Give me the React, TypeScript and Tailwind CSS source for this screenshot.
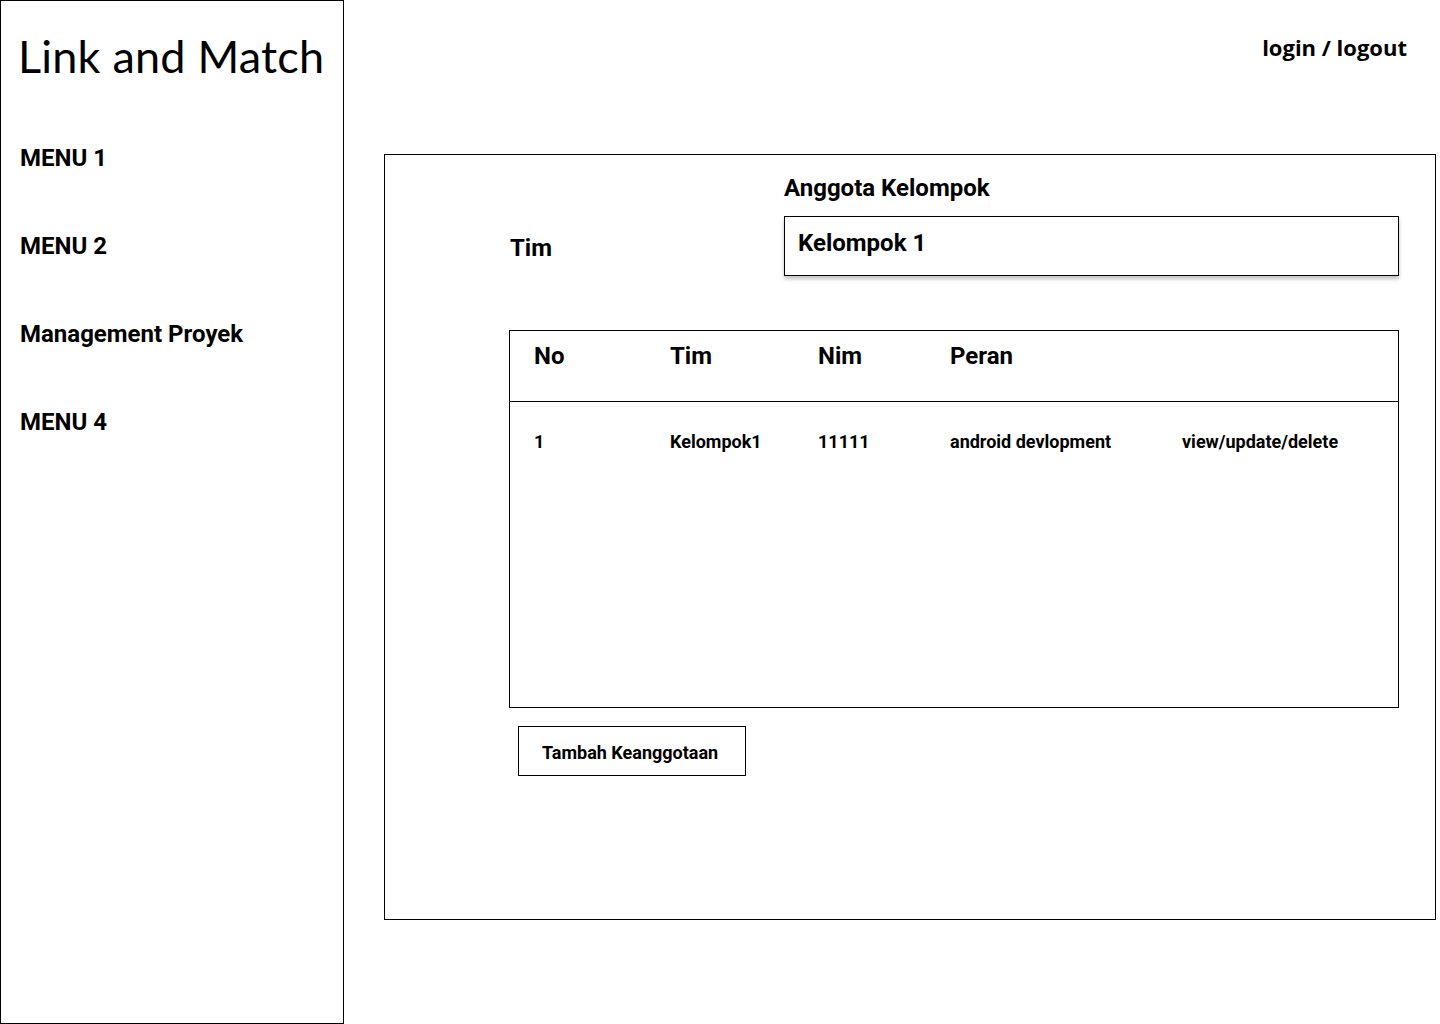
export default function App() {
  const columns = ['No', 'Tim', 'Nim', 'Peran'];
  const rows = [
    { no: '1', tim: 'Kelompok1', nim: '11111', peran: 'android devlopment', aksi: 'view/update/delete' },
  ];

  return (
    <div className="flex w-[1440px] h-[1024px] bg-white text-black font-['Roboto',sans-serif]">
      {/* Sidebar */}
      <aside className="w-[344px] h-[1024px] shrink-0 border border-black pl-[19px]">
        <h1 className="-ml-[2px] mt-[28px] text-[45px] leading-[54px] font-['Lato',sans-serif] font-normal tracking-[0.2px]">
          Link and Match
        </h1>
        <nav className="mt-[61px] flex flex-col gap-[60px]">
          {['MENU 1', 'MENU 2', 'Management Proyek', 'MENU 4'].map((m) => (
            <div key={m} className="text-[24px] leading-[28px] font-bold">
              {m}
            </div>
          ))}
        </nav>
      </aside>

      {/* Main */}
      <main className="flex-1 flex flex-col">
        <div className="flex justify-end pr-[33px] pt-[32px] h-[154px]">
          <span className="text-[22px] leading-[30px] font-bold font-['Open_Sans',sans-serif]">
            login / logout
          </span>
        </div>

        <section className="ml-[40px] mr-[4px] h-[766px] border border-black pl-[124px] pt-[175px] relative">
          {/* Tim + dropdown */}
          <div className="absolute left-[125px] top-[19px] flex">
            <div className="w-[274px] pt-[60px] text-[24px] leading-[28px] font-bold">Tim</div>
            <div>
              <div className="text-[24px] leading-[28px] font-bold">Anggota Kelompok</div>
              <div className="mt-[14px] w-[615px] h-[60px] border border-black bg-white shadow-[0_3px_4px_rgba(0,0,0,0.25)] px-[13px] pt-[12px] text-[24px] leading-[28px] font-bold">
                Kelompok 1
              </div>
            </div>
          </div>

          {/* Table */}
          <div className="w-[890px] h-[378px] border border-black flex flex-col">
            <div className="h-[71px] border-b border-black flex pl-[24px] pt-[11px]">
              {columns.map((c, i) => (
                <div
                  key={c}
                  className={`text-[24px] leading-[28px] font-bold ${
                    i === 0 ? 'w-[136px]' : i === 1 ? 'w-[148px]' : i === 2 ? 'w-[132px]' : 'w-[232px]'
                  }`}
                >
                  {c}
                </div>
              ))}
            </div>
            {rows.map((r) => (
              <div key={r.no} className="flex pl-[24px] pt-[29px] text-[18px] leading-[22px] font-bold">
                <div className="w-[136px]">{r.no}</div>
                <div className="w-[148px]">{r.tim}</div>
                <div className="w-[132px]">{r.nim}</div>
                <div className="w-[232px]">{r.peran}</div>
                <div>{r.aksi}</div>
              </div>
            ))}
          </div>

          <button className="ml-[9px] mt-[18px] w-[228px] h-[50px] border border-black text-[18px] font-bold flex items-center pl-[23px] pt-[2px]">
            Tambah Keanggotaan
          </button>
        </section>
      </main>
    </div>
  );
}
